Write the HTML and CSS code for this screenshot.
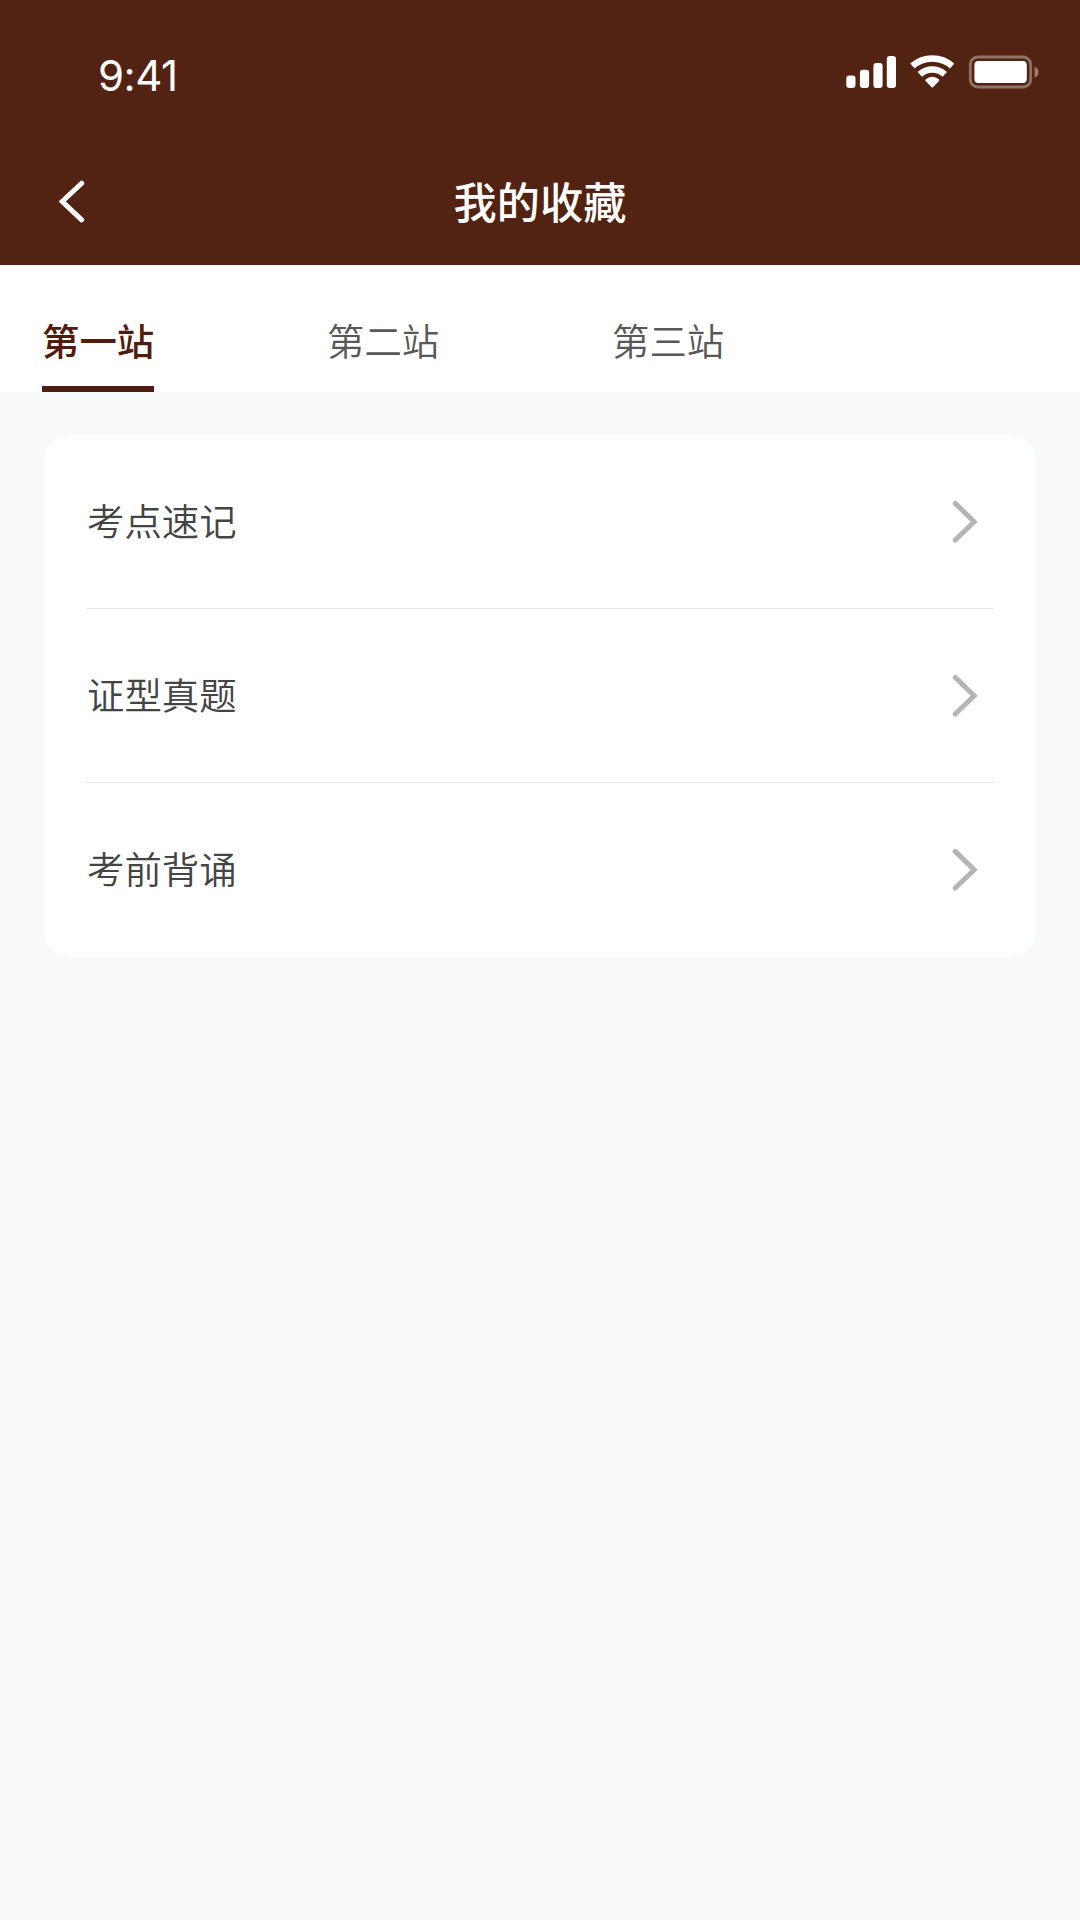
FILE: index.html
```html
<!DOCTYPE html>
<html lang="zh-CN">
<head>
<meta charset="utf-8">
<title>我的收藏</title>
<link rel="stylesheet" href="styles.css">
</head>
<body>
<header class="header">
  <div class="status">
    <span class="time">9:41</span>
    <svg class="indicators" width="194" height="36" viewBox="0 0 194 36" fill="#fff" aria-hidden="true">
      <rect x="0.3" y="21.6" width="9.2" height="12.4" rx="3"/>
      <rect x="13.9" y="15.8" width="9.2" height="18.2" rx="3"/>
      <rect x="27.4" y="9" width="9.2" height="25" rx="3"/>
      <rect x="40.8" y="2" width="9.2" height="32" rx="3"/>
      <g fill="none" stroke="#fff" stroke-width="6.6">
        <path d="M66.4 12a30 30 0 0 1 39.8 0"/>
        <path d="M73.8 20.4a18.6 18.6 0 0 1 25 0"/>
      </g>
      <path d="M85.4 33.1l-5.6-5.9a1.3 1.3 0 0 1 0-2a9.6 9.6 0 0 1 13 0a1.3 1.3 0 0 1 0 2l-5.6 5.9a1.2 1.2 0 0 1-1.8 0z"/>
      <rect x="124.3" y="3" width="60.4" height="30" rx="7.5" fill="none" stroke="#fff" stroke-opacity=".36" stroke-width="2.8"/>
      <rect x="128.4" y="7" width="52.4" height="22" rx="4"/>
      <path d="M188.6 12.4v11.2a6 6 0 0 0 0-11.2z" fill-opacity=".42"/>
    </svg>
  </div>
  <div class="navbar">
    <svg class="back" width="30" height="44" viewBox="0 0 30 44"><path d="M24.7 4.2L5.2 22.5L24.7 40.9"/></svg>
    <h1 class="title">我的收藏</h1>
  </div>
</header>
<nav class="tabs">
  <span class="tab tab-active">第一站</span>
  <span class="tab">第二站</span>
  <span class="tab">第三站</span>
</nav>
<main class="card">
  <div class="row"><span class="label">考点速记</span><svg class="arrow" width="30" height="44" viewBox="0 0 30 44"><path d="M5.2 3.4L24.2 21.7L5.2 40"/></svg></div>
  <div class="row"><span class="label">证型真题</span><svg class="arrow" width="30" height="44" viewBox="0 0 30 44"><path d="M5.2 3.4L24.2 21.7L5.2 40"/></svg></div>
  <div class="row"><span class="label">考前背诵</span><svg class="arrow" width="30" height="44" viewBox="0 0 30 44"><path d="M5.2 3.4L24.2 21.7L5.2 40"/></svg></div>
</main>
</body>
</html>
```
FILE: styles.css
```css
* {
  box-sizing: border-box;
}

body {
  margin: 0;
  min-height: 1920px;
  background: #f7f9fb;
  font-family: "Noto Sans CJK SC", sans-serif;
}

.header {
  height: 265px;
  background: #522312;
  color: #fff;
}

.status {
  display: flex;
  justify-content: space-between;
  align-items: flex-start;
  height: 137px;
  padding: 54px 40px 0 98px;
}

.time {
  font: 400 42px/44px Inter, sans-serif;
  letter-spacing: -0.5px;
}

.navbar {
  display: grid;
  grid-template-columns: 30px 1fr 30px;
  align-items: center;
  height: 128px;
  padding: 0 57px;
}

.back,
.arrow {
  fill: none;
  stroke-width: 5;
  stroke-linecap: round;
}

.back {
  stroke: #fff;
}

.title {
  margin: 0;
  padding-bottom: 3px;
  font-size: 43.2px;
  font-weight: 500;
  line-height: 64px;
  text-align: center;
}

.tabs {
  display: flex;
  gap: 173px;
  height: 127px;
  padding-left: 42px;
  background: #fff;
}

.tab {
  width: 112px;
  padding-top: 47px;
  font-size: 37.44px;
  font-weight: 350;
  line-height: 56px;
  color: #595757;
  text-align: center;
  white-space: nowrap;
}

.tab-active {
  border-bottom: 6px solid #4f1d0f;
  font-weight: 500;
  color: #4f1d0f;
}

.card {
  margin: 43px 43px 0;
  padding: 0 43px;
  border-radius: 29px;
  background: #fff;
}

.row {
  display: flex;
  justify-content: space-between;
  align-items: center;
  height: 174px;
  padding-right: 14px;
  font-size: 37.44px;
  font-weight: 350;
  line-height: 56px;
  color: #444;
}

.row:not(:last-child) {
  border-bottom: 1.5px solid #e2e3e3;
}

.label {
  padding: 0 0 4px 1px;
}

.arrow {
  stroke: #b5b5b6;
}
```
